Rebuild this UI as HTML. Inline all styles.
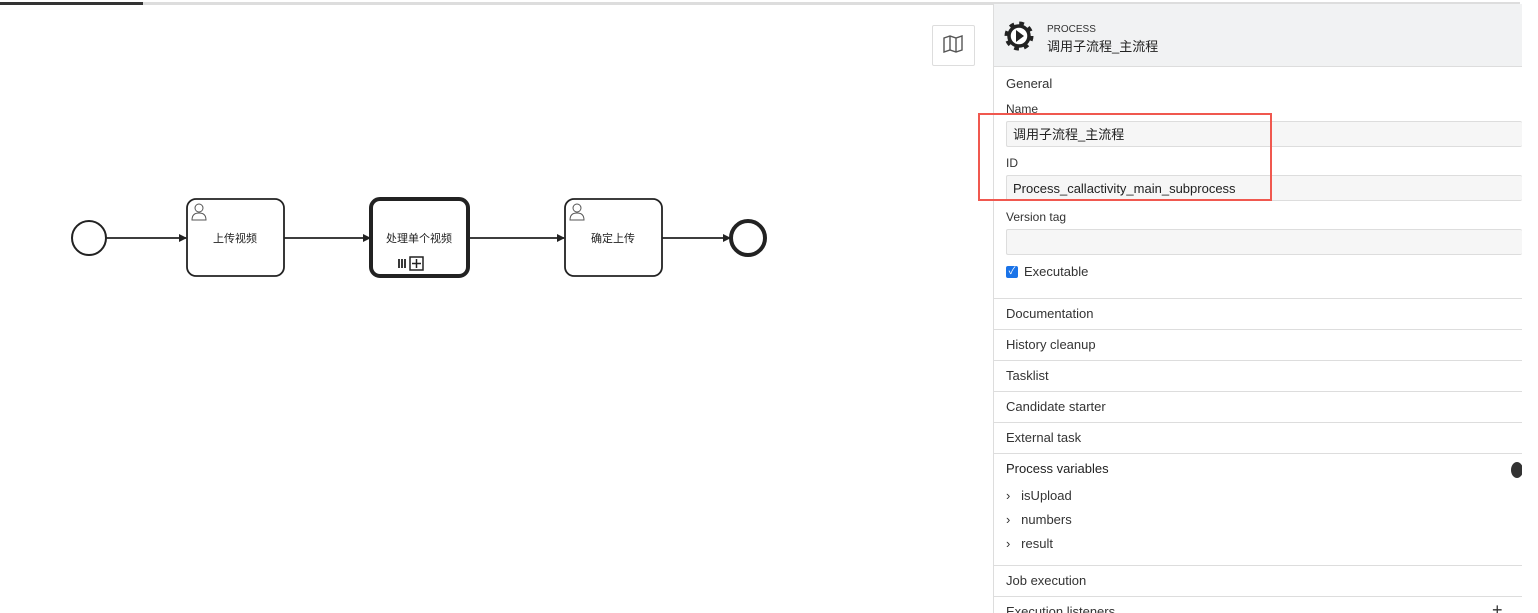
<!DOCTYPE html>
<html><head><meta charset="utf-8"><style>
body{margin:0;width:1538px;height:613px;overflow:hidden;background:#fff;font-family:"Liberation Sans","Noto Sans CJK SC",sans-serif;position:relative}
.abs{position:absolute}
.panel{left:993px;top:4px;width:528px;height:609px;border-left:1px solid #ddd;background:#fff;overflow:hidden}
.hdr{left:0;top:0;width:528px;height:62px;background:#f1f2f3;border-bottom:1px solid #ddd}
.lbl{font-size:12px;color:#333}
.inp{left:12px;width:516px;height:26px;border:1px solid #ddd;border-right:none;background:#f6f6f6;border-radius:2px;font-size:13px;color:#222;line-height:26px;padding-left:6px;box-sizing:border-box}
.row{left:0;width:528px;height:31px;border-top:1px solid #ddd;font-size:13px;color:#333;line-height:30px;padding-left:12px;box-sizing:border-box}
.var{left:12px;font-size:13px;color:#333}
</style></head><body>
<div class="abs" style="left:0;top:2px;width:1520px;height:3px;background:#ddd"></div>
<div class="abs" style="left:0;top:2px;width:143px;height:3px;background:#333"></div>
<div class="abs" style="left:932px;top:25px;width:41px;height:39px;border:1px solid #ddd;border-radius:2px;background:#fff"></div>
<svg class="abs" style="left:942px;top:34px" width="22" height="20" viewBox="0 0 22 20"><path d="M2 4 L8 2 L14 4 L20 2 L20 16 L14 18 L8 16 L2 18 Z M8 2 V16 M14 4 V18" fill="none" stroke="#555" stroke-width="1.4"/></svg>
<svg class="abs" style="left:0;top:0" width="990" height="613">
<defs><marker id="a" markerWidth="8" markerHeight="8" refX="7" refY="4" orient="auto" markerUnits="userSpaceOnUse"><path d="M0 0 L8 4 L0 8Z" fill="#222"/></marker></defs>
<circle cx="89" cy="238" r="17" fill="#fff" stroke="#222" stroke-width="2"/>
<circle cx="748" cy="238" r="17" fill="#fff" stroke="#222" stroke-width="4"/>
<line x1="106" y1="238" x2="186" y2="238" stroke="#222" stroke-width="1.8" marker-end="url(#a)"/>
<line x1="284" y1="238" x2="370" y2="238" stroke="#222" stroke-width="1.8" marker-end="url(#a)"/>
<line x1="468" y1="238" x2="564" y2="238" stroke="#222" stroke-width="1.8" marker-end="url(#a)"/>
<line x1="662" y1="238" x2="730" y2="238" stroke="#222" stroke-width="1.8" marker-end="url(#a)"/>
<rect x="187" y="199" width="97" height="77" rx="9" fill="#fff" stroke="#222" stroke-width="1.8"/>
<rect x="371" y="199" width="97" height="77" rx="9" fill="#fff" stroke="#222" stroke-width="4"/>
<rect x="565" y="199" width="97" height="77" rx="9" fill="#fff" stroke="#222" stroke-width="1.8"/>
<g fill="none" stroke="#555" stroke-width="1"><circle cx="199" cy="208" r="4"/><path d="M192 220 q0-7 7-7 q7 0 7 7 z"/><circle cx="577" cy="208" r="4"/><path d="M570 220 q0-7 7-7 q7 0 7 7 z"/></g>
<text x="235" y="242" font-size="11" text-anchor="middle" fill="#222">上传视频</text>
<text x="419" y="242" font-size="11" text-anchor="middle" fill="#222">处理单个视频</text>
<text x="613" y="242" font-size="11" text-anchor="middle" fill="#222">确定上传</text>
<g stroke="#222"><line x1="399" y1="259" x2="399" y2="268" stroke-width="1.8"/><line x1="402" y1="259" x2="402" y2="268" stroke-width="1.8"/><line x1="405" y1="259" x2="405" y2="268" stroke-width="1.8"/><rect x="410" y="257" width="13" height="13" fill="none" stroke-width="1.5"/><path d="M416.5 259 V268 M412 263.5 H421" stroke-width="1.5"/></g>
</svg>
<div class="abs panel">
<div class="abs hdr"></div>
<svg class="abs" style="left:9px;top:16px" width="32" height="32" viewBox="0 0 32 32"><circle cx="16" cy="16" r="12" fill="none" stroke="#222" stroke-width="5" stroke-dasharray="4.5 4.9"/><circle cx="16" cy="16" r="10" fill="#fff" stroke="#222" stroke-width="3.5"/><path d="M13 10 L21 16 L13 22Z" fill="#222"/></svg>
<div class="abs" style="left:53px;top:20px;font-size:10px;color:#333">PROCESS</div>
<div class="abs" style="left:53px;top:32px;font-size:13px;color:#222">调用子流程_主流程</div>
<div class="abs" style="left:12px;top:72px;font-size:13px;color:#333">General</div>
<div class="abs lbl" style="left:12px;top:98px">Name</div>
<div class="abs inp" style="top:117px">调用子流程_主流程</div>
<div class="abs lbl" style="left:12px;top:152px">ID</div>
<div class="abs inp" style="top:171px">Process_callactivity_main_subprocess</div>
<div class="abs lbl" style="left:12px;top:206px">Version tag</div>
<div class="abs inp" style="top:225px"></div>
<div class="abs" style="left:12px;top:262px;width:12px;height:12px;background:#1a73e8;border-radius:2px;color:#fff;font-size:10px;line-height:12px;text-align:center">✓</div>
<div class="abs" style="left:30px;top:260px;font-size:13px;color:#333">Executable</div>
<div class="abs row" style="top:294px">Documentation</div>
<div class="abs row" style="top:325px">History cleanup</div>
<div class="abs row" style="top:356px">Tasklist</div>
<div class="abs row" style="top:387px">Candidate starter</div>
<div class="abs row" style="top:418px">External task</div>
<div class="abs row" style="top:449px;color:#222">Process variables</div>
<div class="abs" style="left:517px;top:458px;width:12px;height:16px;border-radius:50%;background:#333"></div>
<div class="abs var" style="top:484px">›&nbsp;&nbsp; isUpload</div>
<div class="abs var" style="top:508px">›&nbsp;&nbsp; numbers</div>
<div class="abs var" style="top:532px">›&nbsp;&nbsp; result</div>
<div class="abs row" style="top:561px">Job execution</div>
<div class="abs row" style="top:592px">Execution listeners</div>
<div class="abs" style="left:498px;top:596px;font-size:18px;color:#333">+</div>
</div>
<div class="abs" style="left:978px;top:113px;width:294px;height:88px;border:2px solid #f0584f;box-sizing:border-box"></div>
</body></html>
